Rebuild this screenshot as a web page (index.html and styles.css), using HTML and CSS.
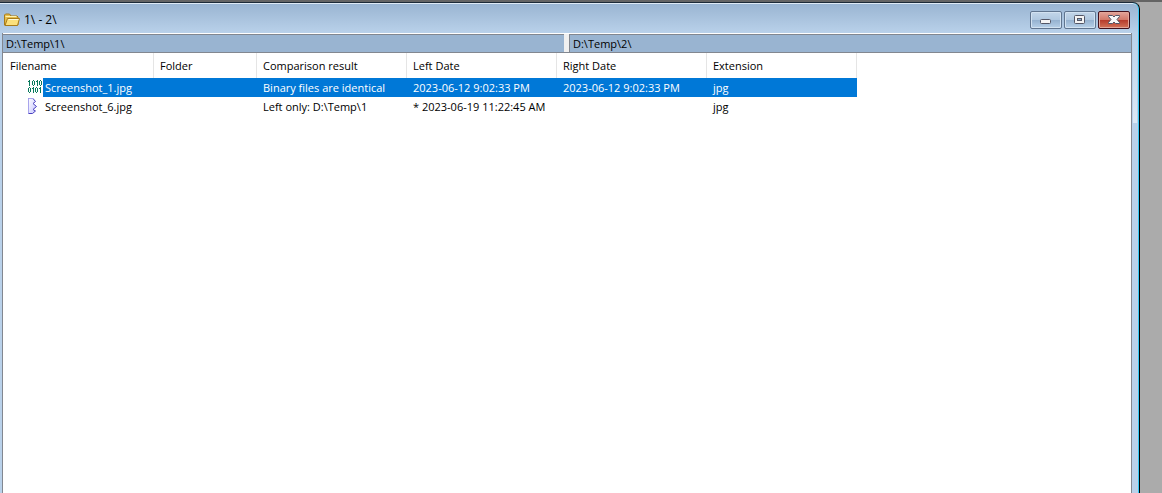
FILE: index.html
```html
<!DOCTYPE html>
<html lang="en">
<head>
    <meta charset="UTF-8">
    <title>1\ - 2\</title>
    <link rel="stylesheet" href="styles.css">
</head>
<body>
    <div class="window">
        <header class="titlebar">
            <svg class="folder" viewBox="0 0 16 16" width="16" height="16">
                <path d="M.5 13V3l1-1h4l1.500 2h6l1 1v8z" fill="#e5bd4b" stroke="#a87b18"/>
                <path d="M1.500 4.500h11" stroke="#fff3b0"/>
                <path d="M1 13.500L3.500 6.500h12l-2 7z" fill="#fbe07c" stroke="#a87b18"/>
                <path d="M4.500 7.500h10" stroke="#fffbdc"/>
            </svg>
            <h1>1\ - 2\</h1>
            <div class="controls">
                <button class="control" aria-label="Minimize">
                    <svg viewBox="0 0 12 10" width="12" height="10">
                        <rect x=".5" y="4.500" width="10" height="4" rx="1" fill="#f4f4f4" stroke="#535666"/>
                    </svg>
                </button>
                <button class="control" aria-label="Maximize">
                    <svg viewBox="0 0 12 10" width="12" height="10">
                        <rect x=".5" y=".5" width="10" height="8" rx="1" fill="#f4f4f4" stroke="#535666"/>
                        <rect x="3.500" y="3.500" width="4" height="2" fill="#8fb0d0" stroke="#535666"/>
                    </svg>
                </button>
                <button class="control close" aria-label="Close">
                    <svg viewBox="0 0 12 10" width="12" height="10">
                        <path d="M.5 .5H4.500L6 2 7.500 .5h4v1L9 4.500l2.500 3v1h-4L6 7 4.500 8.500H.5v-1l2.500-3-2.500-3z" fill="#f8f8f8" stroke="#535666"/>
                    </svg>
                </button>
            </div>
        </header>
        <main class="client">
            <div class="panes">
                <div class="pane">D:\Temp\1\</div>
                <div class="pane">D:\Temp\2\</div>
            </div>
            <table class="files">
                <thead>
                    <tr>
                        <th class="name">Filename</th>
                        <th class="folder-col">Folder</th>
                        <th>Comparison result</th>
                        <th>Left Date</th>
                        <th>Right Date</th>
                        <th>Extension</th>
                    </tr>
                </thead>
                <tbody>
                    <tr class="selected">
                        <td>
                            <div class="file">
                                <svg viewBox="0 0 15 17" width="15" height="17" shape-rendering="crispEdges" fill="none" stroke="#087a5c">
                                    <path d="M0 2.500h1M1.500 1v6M4.500 2v4M6.500 2v4M5 1.500h1M5 6.500h1M8 2.500h1M9.500 1v6M11.500 2v4M13.500 2v4M12 1.500h1M12 6.500h1"/>
                                    <path d="M.5 9v4M2.500 9v4M1 8.500h1M1 13.500h1M4 9.500h1M5.500 8v6M7.500 9v4M9.500 9v4M8 8.500h1M8 13.500h1M11 9.500h1M12.500 8v6"/>
                                </svg>
                                <span>Screenshot_1.jpg</span>
                            </div>
                        </td>
                        <td></td>
                        <td>Binary files are identical</td>
                        <td>2023-06-12 9:02:33 PM</td>
                        <td>2023-06-12 9:02:33 PM</td>
                        <td>jpg</td>
                    </tr>
                    <tr>
                        <td>
                            <div class="file">
                                <svg viewBox="0 0 15 17" width="15" height="17">
                                    <defs>
                                        <linearGradient id="page" x2="1" y2="1">
                                            <stop offset="0" stop-color="#fff"/>
                                            <stop offset="1" stop-color="#c4c4ff"/>
                                        </linearGradient>
                                    </defs>
                                    <path d="M.5 .5h4.500l2.500 3-2.500 2 3.500 3-3.500 3 2.500 1.500-3 2.500h-4z" fill="url(#page)" stroke="#4a40c0"/>
                                    <path d="M.5 15.500V.5h5" fill="none" stroke="#a8a4ec"/>
                                </svg>
                                <span>Screenshot_6.jpg</span>
                            </div>
                        </td>
                        <td></td>
                        <td>Left only: D:\Temp\1</td>
                        <td>* 2023-06-19 11:22:45 AM</td>
                        <td></td>
                        <td>jpg</td>
                    </tr>
                </tbody>
            </table>
        </main>
    </div>
</body>
</html>
```

FILE: styles.css
```css
* { box-sizing: border-box; }
body { margin: 0; height: 100vh; overflow: hidden; background: #ababab; border-top: 2px solid #646464; font: 11px/16px "Open Sans", "Noto Sans", sans-serif; color: #000; }
.window { display: flex; flex-direction: column; height: 100%; margin-right: 22px; padding-right: 7px; padding-left: 2px; background: linear-gradient(#b9d1ea, #dce8f5) right 2px top 30px / 4px 90px no-repeat, linear-gradient(#99b4d1, #b9d1ea 30px); border-top: 1px solid #1c2a38; border-right: 1px solid #000; border-top-right-radius: 7px; box-shadow: inset -1px 0 #35c8f4, inset 0 1px #dfeaf5; }
.titlebar { display: flex; align-items: center; height: 30px; padding: 4px 2px 0 2px; }
.titlebar h1 { flex: 1; margin: 0 0 0 4px; font-size: 12px; font-weight: normal; }
.controls { display: flex; gap: 2px; }
.control { display: flex; align-items: center; justify-content: center; width: 32px; height: 18px; padding: 0; border: 1px solid #60758f; border-radius: 2px; background: linear-gradient(#c3d6e9, #b0c8e0 48%, #94b1cf 50%, #b7d0e8); box-shadow: inset 0 0 0 1px #d2e2f1; }
.close { border-color: #43101b; background: linear-gradient(#e3a49a, #d27969 48%, #b5392a 50%, #d4745a); box-shadow: inset 0 0 0 1px #e2a699; }
.client { flex: 1; background: #fff; border-left: 1px solid #828790; border-right: 1px solid #828790; }
.panes { display: flex; gap: 5px; background: #f0f0f0; border-top: 1px solid #fff; border-bottom: 1px solid #828790; }
.pane { flex: 1; height: 18px; padding-left: 3px; background: #99b4d1; border-top: 1px solid #828790; line-height: 18px; }
.pane + .pane { border-left: 1px solid #828790; }
.files { table-layout: fixed; width: 854px; border-collapse: separate; border-spacing: 0; }
.files th { width: 150px; height: 25px; padding: 0 0 0 6px; border-right: 1px solid #e5e5e5; font-weight: normal; text-align: left; }
.files .name { width: 151px; padding-left: 7px; }
.files .folder-col { width: 103px; }
.files td { height: 19px; padding: 0 0 0 6px; white-space: nowrap; }
.files td:first-child { padding: 0 0 0 25px; }
.file { display: flex; align-items: center; }
.file span { flex: 1; padding-left: 2px; line-height: 19px; }
.selected td { background: #0078d7; color: #fff; }
.selected td:first-child { background: none; }
.selected .file span { background: #0078d7; }
```
